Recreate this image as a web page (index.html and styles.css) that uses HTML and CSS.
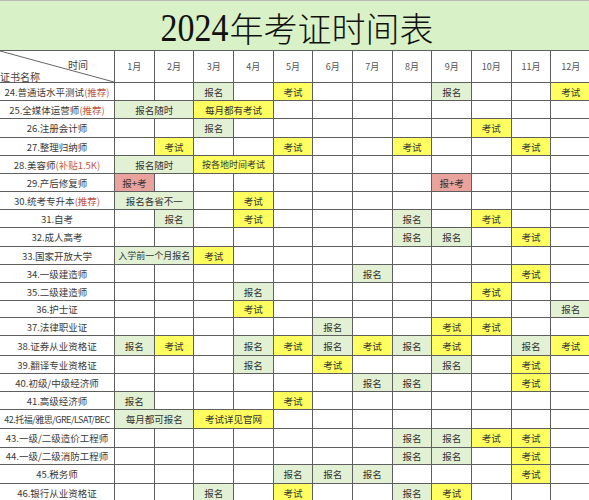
FILE: index.html
```html
<!DOCTYPE html>
<html lang="zh-CN">
<head>
<meta charset="utf-8">
<title>2024年考证时间表</title>
<link rel="stylesheet" href="styles.css">
</head>
<body>
<div class="sheet">
  <div class="title"><span class="yr">2024</span>年考证时间表</div>
  <div class="grid">
    <div class="corner">
      <svg class="diag" viewBox="0 0 114 31" preserveAspectRatio="none"><line x1="0" y1="0" x2="114" y2="31" stroke="#666" stroke-width="1"/></svg>
      <span class="ct">时间</span>
      <span class="cn">证书名称</span>
    </div>
    <div class="mh">1月</div><div class="mh">2月</div><div class="mh">3月</div><div class="mh">4月</div><div class="mh">5月</div><div class="mh">6月</div><div class="mh">7月</div><div class="mh">8月</div><div class="mh">9月</div><div class="mh">10月</div><div class="mh">11月</div><div class="mh">12月</div>

    <div class="nm">24.普通话水平测试<em>(推荐)</em></div>
    <div class="c"></div><div class="c"></div><div class="c g">报名</div><div class="c"></div><div class="c y">考试</div><div class="c"></div><div class="c"></div><div class="c"></div><div class="c g">报名</div><div class="c"></div><div class="c"></div><div class="c y">考试</div>

    <div class="nm">25.全媒体运营师<em>(推荐)</em></div>
    <div class="c g s2">报名随时</div><div class="c y s2">每月都有考试</div><div class="c"></div><div class="c"></div><div class="c"></div><div class="c"></div><div class="c"></div><div class="c"></div><div class="c"></div><div class="c"></div>

    <div class="nm">26.注册会计师</div>
    <div class="c"></div><div class="c"></div><div class="c g">报名</div><div class="c"></div><div class="c"></div><div class="c"></div><div class="c"></div><div class="c"></div><div class="c"></div><div class="c y">考试</div><div class="c"></div><div class="c"></div>

    <div class="nm">27.整理归纳师</div>
    <div class="c"></div><div class="c y">考试</div><div class="c"></div><div class="c"></div><div class="c y">考试</div><div class="c"></div><div class="c"></div><div class="c y">考试</div><div class="c"></div><div class="c"></div><div class="c y">考试</div><div class="c"></div>

    <div class="nm">28.美容师<em>(补贴1.5K)</em></div>
    <div class="c g s2">报名随时</div><div class="c y s2 sm">按各地时间考试</div><div class="c"></div><div class="c"></div><div class="c"></div><div class="c"></div><div class="c"></div><div class="c"></div><div class="c"></div><div class="c"></div>

    <div class="nm">29.产后修复师</div>
    <div class="c r">报+考</div><div class="c"></div><div class="c"></div><div class="c"></div><div class="c"></div><div class="c"></div><div class="c"></div><div class="c"></div><div class="c r">报+考</div><div class="c"></div><div class="c"></div><div class="c"></div>

    <div class="nm">30.统考专升本<em>(推荐)</em></div>
    <div class="c g s2">报名各省不一</div><div class="c"></div><div class="c y">考试</div><div class="c"></div><div class="c"></div><div class="c"></div><div class="c"></div><div class="c"></div><div class="c"></div><div class="c"></div><div class="c"></div>

    <div class="nm">31.自考</div>
    <div class="c"></div><div class="c g">报名</div><div class="c"></div><div class="c y">考试</div><div class="c"></div><div class="c"></div><div class="c"></div><div class="c g">报名</div><div class="c"></div><div class="c y">考试</div><div class="c"></div><div class="c"></div>

    <div class="nm">32.成人高考</div>
    <div class="c"></div><div class="c"></div><div class="c"></div><div class="c"></div><div class="c"></div><div class="c"></div><div class="c"></div><div class="c g">报名</div><div class="c g">报名</div><div class="c"></div><div class="c y">考试</div><div class="c"></div>

    <div class="nm">33.国家开放大学</div>
    <div class="c g s2 sm">入学前一个月报名</div><div class="c y">考试</div><div class="c"></div><div class="c"></div><div class="c"></div><div class="c"></div><div class="c"></div><div class="c"></div><div class="c"></div><div class="c"></div><div class="c"></div>

    <div class="nm">34.一级建造师</div>
    <div class="c"></div><div class="c"></div><div class="c"></div><div class="c"></div><div class="c"></div><div class="c"></div><div class="c g">报名</div><div class="c"></div><div class="c"></div><div class="c"></div><div class="c y">考试</div><div class="c"></div>

    <div class="nm">35.二级建造师</div>
    <div class="c"></div><div class="c"></div><div class="c"></div><div class="c g">报名</div><div class="c"></div><div class="c"></div><div class="c"></div><div class="c"></div><div class="c"></div><div class="c y">考试</div><div class="c"></div><div class="c"></div>

    <div class="nm">36.护士证</div>
    <div class="c"></div><div class="c"></div><div class="c"></div><div class="c y">考试</div><div class="c"></div><div class="c"></div><div class="c"></div><div class="c"></div><div class="c"></div><div class="c"></div><div class="c"></div><div class="c g">报名</div>

    <div class="nm">37.法律职业证</div>
    <div class="c"></div><div class="c"></div><div class="c"></div><div class="c"></div><div class="c"></div><div class="c g">报名</div><div class="c"></div><div class="c"></div><div class="c y">考试</div><div class="c y">考试</div><div class="c"></div><div class="c"></div>

    <div class="nm">38.证券从业资格证</div>
    <div class="c g">报名</div><div class="c y">考试</div><div class="c"></div><div class="c g">报名</div><div class="c y">考试</div><div class="c g">报名</div><div class="c y">考试</div><div class="c g">报名</div><div class="c y">考试</div><div class="c"></div><div class="c g">报名</div><div class="c y">考试</div>

    <div class="nm">39.翻译专业资格证</div>
    <div class="c"></div><div class="c"></div><div class="c"></div><div class="c g">报名</div><div class="c"></div><div class="c y">考试</div><div class="c"></div><div class="c"></div><div class="c g">报名</div><div class="c"></div><div class="c y">考试</div><div class="c"></div>

    <div class="nm">40.初级/中级经济师</div>
    <div class="c"></div><div class="c"></div><div class="c"></div><div class="c"></div><div class="c"></div><div class="c"></div><div class="c g">报名</div><div class="c g">报名</div><div class="c"></div><div class="c"></div><div class="c y">考试</div><div class="c"></div>

    <div class="nm">41.高级经济师</div>
    <div class="c g">报名</div><div class="c"></div><div class="c"></div><div class="c"></div><div class="c y">考试</div><div class="c"></div><div class="c"></div><div class="c"></div><div class="c"></div><div class="c"></div><div class="c"></div><div class="c"></div>

    <div class="nm narrow">42.托福/雅思/GRE/LSAT/BEC</div>
    <div class="c g s2">每月都可报名</div><div class="c y s2">考试详见官网</div><div class="c"></div><div class="c"></div><div class="c"></div><div class="c"></div><div class="c"></div><div class="c"></div><div class="c"></div><div class="c"></div>

    <div class="nm">43.一级/二级造价工程师</div>
    <div class="c"></div><div class="c"></div><div class="c"></div><div class="c"></div><div class="c"></div><div class="c"></div><div class="c"></div><div class="c g">报名</div><div class="c g">报名</div><div class="c y">考试</div><div class="c y">考试</div><div class="c"></div>

    <div class="nm">44.一级/二级消防工程师</div>
    <div class="c"></div><div class="c"></div><div class="c"></div><div class="c"></div><div class="c"></div><div class="c"></div><div class="c"></div><div class="c g">报名</div><div class="c g">报名</div><div class="c"></div><div class="c y">考试</div><div class="c"></div>

    <div class="nm">45.税务师</div>
    <div class="c"></div><div class="c"></div><div class="c"></div><div class="c"></div><div class="c g">报名</div><div class="c g">报名</div><div class="c g">报名</div><div class="c"></div><div class="c"></div><div class="c"></div><div class="c y">考试</div><div class="c"></div>

    <div class="nm">46.银行从业资格证</div>
    <div class="c"></div><div class="c"></div><div class="c g">报名</div><div class="c"></div><div class="c y">考试</div><div class="c"></div><div class="c"></div><div class="c g">报名</div><div class="c y">考试</div><div class="c"></div><div class="c"></div><div class="c"></div>
  </div>
</div>
</body>
</html>
```
FILE: styles.css
```css
* { box-sizing: border-box; }
html, body { margin: 0; padding: 0; }
body {
  width: 589px;
  height: 500px;
  overflow: hidden;
  background: #fff;
  font-family: "Noto Sans CJK SC", sans-serif;
  color: #333;
}
.sheet { width: 590px; }
.title {
  height: 50px;
  background: #d9f1c6;
  border-top: 1px solid #b9b9b9;
  display: flex;
  align-items: center;
  justify-content: center;
  padding-left: 4px;
  padding-top: 4px;
  font-family: "Liberation Serif", "Noto Sans CJK SC", serif;
  font-size: 34px;
  font-weight: 300;
  color: #111;
}
.yr {
  display: inline-block;
  transform: scaleY(1.2);
  margin-right: 1px;
  font-weight: 400;
}
.grid {
  display: grid;
  width: 590px;
  grid-template-columns: 114px repeat(12, 1fr);
  grid-template-rows: 31px 17px 17px 18px 17px 17px 17px 17px 17px 18px 17px 17px 17px 16px 17px 19px 17px 17px 17px 18px 18px 16px 18px 17px;
  gap: 1px;
  background: #5e5e5e;
  border-top: 1px solid #5e5e5e;
}
.grid > div { background: #fff; }
.corner {
  position: relative;
  display: flex;
  flex-direction: column;
  justify-content: space-between;
  font-size: 10px;
  line-height: 11px;
  color: #444;
  padding: 8px 0 0 0;
}
.diag {
  position: absolute;
  left: 0;
  top: 0;
  width: 100%;
  height: 100%;
}
.ct { align-self: flex-end; margin-right: 26px; }
.cn { align-self: flex-start; }
.mh {
  display: flex;
  align-items: center;
  justify-content: center;
  font-size: 9px;
  color: #555;
}
.nm {
  display: flex;
  align-items: center;
  justify-content: center;
  font-size: 9.5px;
  color: #3a3a3a;
  white-space: nowrap;
  overflow: hidden;
}
.nm em { font-style: normal; color: #c0573f; }
.nm.narrow { font-size: 9px; letter-spacing: -0.5px; }
.c {
  display: flex;
  align-items: center;
  justify-content: center;
  font-size: 9.5px;
  color: #333;
  white-space: nowrap;
}
.c.sm { font-size: 9px; }
.grid > .g { background: #e2f1d4; }
.grid > .y { background: #ffff60; }
.grid > .r { background: #e9a29c; }
.s2 { grid-column: span 2; }
```
